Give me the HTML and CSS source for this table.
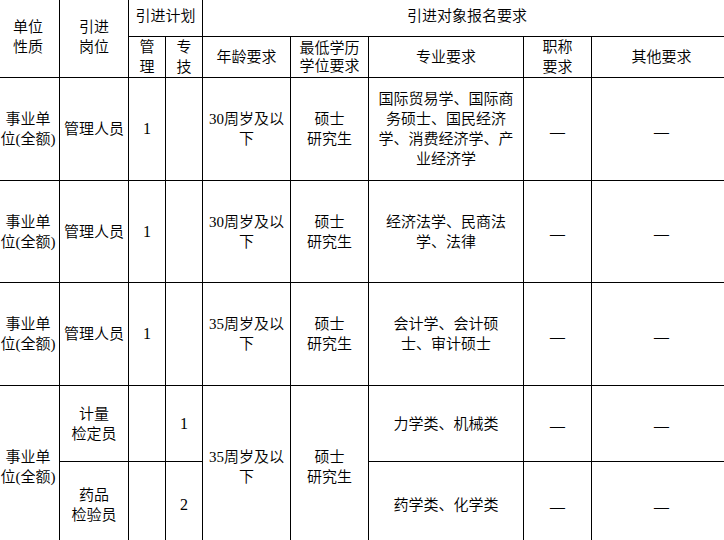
FILE: index.html
```html
<!DOCTYPE html>
<html lang="zh-CN">
<head>
<meta charset="utf-8">
<title>引进计划</title>
<link rel="stylesheet" href="styles.css">
</head>
<body>
<div class="sheet">
  <div class="cell rs2">单位<br>性质</div>
  <div class="cell rs2">引进<br>岗位</div>
  <div class="cell cs2">引进计划</div>
  <div class="cell cs5">引进对象报名要求</div>
  <div class="cell">管<br>理</div>
  <div class="cell">专<br>技</div>
  <div class="cell">年龄要求</div>
  <div class="cell tight">最低学历<br>学位要求</div>
  <div class="cell">专业要求</div>
  <div class="cell">职称<br>要求</div>
  <div class="cell">其他要求</div>

  <div class="cell">事业单<br>位(全额)</div>
  <div class="cell">管理人员</div>
  <div class="cell num">1</div>
  <div class="cell"></div>
  <div class="cell">30周岁及以<br>下</div>
  <div class="cell">硕士<br>研究生</div>
  <div class="cell">国际贸易学、国际商<br>务硕士、国民经济<br>学、消费经济学、产<br>业经济学</div>
  <div class="cell dash">—</div>
  <div class="cell dash">—</div>

  <div class="cell">事业单<br>位(全额)</div>
  <div class="cell">管理人员</div>
  <div class="cell num">1</div>
  <div class="cell"></div>
  <div class="cell">30周岁及以<br>下</div>
  <div class="cell">硕士<br>研究生</div>
  <div class="cell">经济法学、民商法<br>学、法律</div>
  <div class="cell dash">—</div>
  <div class="cell dash">—</div>

  <div class="cell">事业单<br>位(全额)</div>
  <div class="cell">管理人员</div>
  <div class="cell num">1</div>
  <div class="cell"></div>
  <div class="cell">35周岁及以<br>下</div>
  <div class="cell">硕士<br>研究生</div>
  <div class="cell">会计学、会计硕<br>士、审计硕士</div>
  <div class="cell dash">—</div>
  <div class="cell dash">—</div>

  <div class="cell rs2">事业单<br>位(全额)</div>
  <div class="cell">计量<br>检定员</div>
  <div class="cell"></div>
  <div class="cell num">1</div>
  <div class="cell rs2">35周岁及以<br>下</div>
  <div class="cell rs2">硕士<br>研究生</div>
  <div class="cell">力学类、机械类</div>
  <div class="cell dash">—</div>
  <div class="cell dash">—</div>

  <div class="cell">药品<br>检验员</div>
  <div class="cell"></div>
  <div class="cell num">2</div>
  <div class="cell">药学类、化学类</div>
  <div class="cell dash">—</div>
  <div class="cell dash">—</div>
</div>
</body>
</html>
```
FILE: styles.css
```css
html, body {
  margin: 0;
  padding: 0;
  overflow: hidden;
  background: #fff;
}

body {
  font-family: "Liberation Serif", "Noto Sans CJK SC", serif;
  font-size: 15px;
  font-weight: 350;
  line-height: 20px;
  color: #000;
}

.sheet {
  display: grid;
  grid-template-columns: 62px 68px 36px 36px 87px 77px 154px 67px 139px;
  grid-template-rows: 40px 40px 102px 101px 102px 75px 85px;
  gap: 1px;
  padding: 1px;
  width: max-content;
  background: #000;
  margin: -5px 0 0 -4px;
}

.cell {
  background: #fff;
  display: flex;
  align-items: center;
  justify-content: center;
  text-align: center;
  white-space: nowrap;
}

.tight {
  line-height: 18px;
}

.num {
  font-size: 16px;
}

.rs2 {
  grid-row: span 2;
}

.cs2 {
  grid-column: span 2;
}

.cs5 {
  grid-column: span 5;
}

.dash {
  font-family: "Noto Sans CJK SC", sans-serif;
  font-size: 19px;
  padding-top: 3px;
}
```
